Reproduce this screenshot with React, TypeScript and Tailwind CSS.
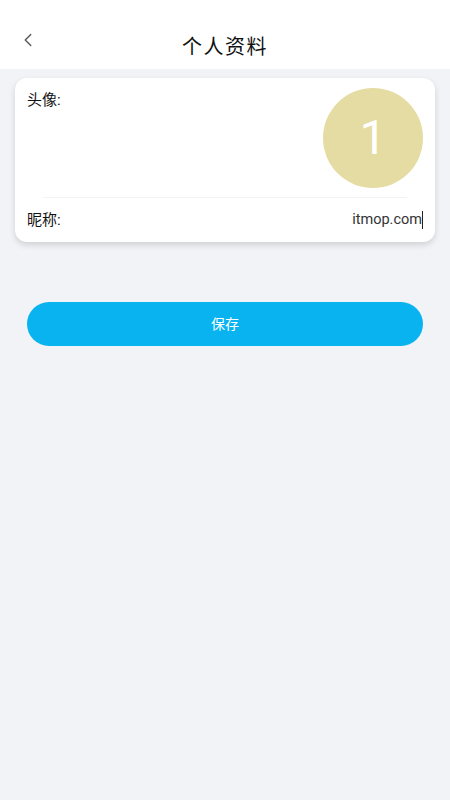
import { ChevronLeft } from "lucide-react";

const FONT = { fontFamily: '"Roboto", "Noto Sans CJK SC", sans-serif' };

export default function App() {
  return (
    <div className="flex min-h-[800px] w-full flex-col bg-[#f2f3f7]" style={FONT}>
      {/* Header */}
      <div className="relative flex h-[69px] items-end justify-center bg-white pb-[8px]">
        <button className="absolute left-[17px] top-[29px] text-[#555]">
          <ChevronLeft className="h-[22px] w-[22px]" strokeWidth={1.5} />
        </button>
        <h1 className="text-[20px] leading-[28px] tracking-[1.5px] text-[#111]">个人资料</h1>
      </div>

      {/* Profile card */}
      <div className="mx-[15px] mt-[9px] rounded-[12px] bg-white shadow-[0_3px_6px_rgba(0,0,0,0.14)]">
        <div className="flex justify-between pl-3 pr-3 pt-[10px]">
          <span className="mt-[1px] text-[15px] leading-[22px] text-[#111]">头像:</span>
          <div className="flex h-[100px] w-[100px] items-center justify-center rounded-full bg-[#e5dca3]">
            <span className="text-[48px] font-normal leading-none text-white">1</span>
          </div>
        </div>
        <div className="mx-[28px] mt-[9px] h-px bg-[#f3f3f3]" />
        <div className="flex h-[44px] items-center justify-between px-3">
          <span className="text-[15px] text-[#111]">昵称:</span>
          <span className="flex items-center text-[14.5px] text-[#333]">
            itmop.com
            <span className="h-[18px] w-px bg-[#222]" />
          </span>
        </div>
      </div>

      {/* Save button */}
      <div className="mt-[60px] px-[27px]">
        <button className="flex h-[44px] w-full items-center justify-center rounded-full bg-[#09b3ef] text-[14px] text-white">
          保存
        </button>
      </div>
    </div>
  );
}
